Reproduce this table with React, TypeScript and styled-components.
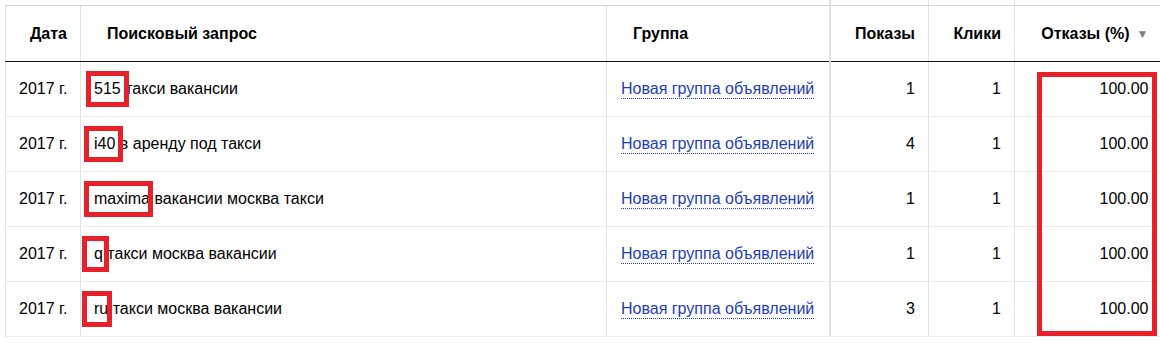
import React from "react";
import styled, { createGlobalStyle } from "styled-components";

const GlobalStyle = createGlobalStyle`
  html, body {
    margin: 0;
    padding: 0;
    background: #fff;
    overflow: hidden;
  }
  body {
    font-family: "Liberation Sans", Arial, sans-serif;
    color: #000;
  }
`;

const Wrapper = styled.div`
  position: relative;
  padding-left: 5px;
  width: 1160px;
  height: 344px;
  box-sizing: border-box;
`;

const Table = styled.table`
  border-collapse: collapse;
  table-layout: fixed;
  width: 1156px;
  font-size: 16px;
`;

const TopCell = styled.td<{ $edge?: boolean; $thick?: boolean }>`
  height: 5px;
  padding: 0;
  border-bottom: 1px solid #d2d2d2;
  border-left: ${(p) =>
    p.$edge ? `${p.$thick ? 2 : 1}px solid #e2e2e2` : "none"};
`;

const HeadCell = styled.th<{ $align?: string; $pad?: string; $thick?: boolean }>`
  height: 56px;
  padding: ${(p) => p.$pad || "0 13px"};
  text-align: ${(p) => p.$align || "left"};
  font-weight: bold;
  white-space: nowrap;
  border-left: ${(p) => (p.$thick ? 2 : 1)}px solid #e2e2e2;
  border-bottom: 1px solid #111;
  box-sizing: border-box;
`;

const Cell = styled.td<{ $align?: string; $pad?: string; $thick?: boolean }>`
  height: 55px;
  padding: ${(p) => p.$pad || "0 13px"};
  text-align: ${(p) => p.$align || "left"};
  white-space: nowrap;
  border-left: ${(p) => (p.$thick ? 2 : 1)}px solid #e2e2e2;
  border-bottom: 1px solid #ececec;
  box-sizing: border-box;
`;

const SortArrow = styled.span`
  display: inline-block;
  margin-left: 7px;
  font-size: 12px;
  color: #808080;
  vertical-align: 1px;
`;

const GroupLink = styled.a`
  color: #1c3cc0;
  text-decoration: none;
  border-bottom: 1px dotted #1c3cc0;
  padding-bottom: 1px;
  cursor: pointer;
`;

const Mark = styled.span<{ $l: number; $r: number }>`
  position: relative;
  display: inline-block;
  line-height: 18px;

  &::after {
    content: "";
    position: absolute;
    top: -9px;
    height: 36px;
    left: ${(p) => p.$l}px;
    right: ${(p) => p.$r}px;
    border: 5px solid #e8202a;
    box-sizing: border-box;
  }
`;

const BigBox = styled.div`
  position: absolute;
  left: 1037px;
  top: 72px;
  width: 120px;
  height: 264px;
  border: 5px solid #e8202a;
  box-sizing: border-box;
`;

type Row = {
  mark: string;
  rest: string;
  l: number;
  r: number;
  shows: number;
  clicks: number;
};

const rows: Row[] = [
  { mark: "515", rest: "такси вакансии", l: -8, r: -8, shows: 1, clicks: 1 },
  { mark: "i40", rest: "в аренду под такси", l: -10, r: -8, shows: 4, clicks: 1 },
  { mark: "maxima", rest: "вакансии москва такси", l: -10, r: -3, shows: 1, clicks: 1 },
  { mark: "q", rest: "такси москва вакансии", l: -12, r: -6, shows: 1, clicks: 1 },
  { mark: "ru", rest: "такси москва вакансии", l: -12, r: -4, shows: 3, clicks: 1 },
];

export default function App() {
  return (
    <Wrapper>
      <GlobalStyle />
      <Table>
        <colgroup>
          <col style={{ width: 75 }} />
          <col style={{ width: 526 }} />
          <col style={{ width: 223 }} />
          <col style={{ width: 99 }} />
          <col style={{ width: 86 }} />
          <col style={{ width: 147 }} />
        </colgroup>
        <tbody>
          <tr>
            <TopCell />
            <TopCell />
            <TopCell />
            <TopCell $edge $thick />
            <TopCell $edge />
            <TopCell $edge />
          </tr>
          <tr>
            <HeadCell $align="right">Дата</HeadCell>
            <HeadCell $pad="0 26px">Поисковый запрос</HeadCell>
            <HeadCell $pad="0 26px">Группа</HeadCell>
            <HeadCell $align="right" $thick>
              Показы
            </HeadCell>
            <HeadCell $align="right">Клики</HeadCell>
            <HeadCell $align="right" $pad="0 13px 0 0">
              Отказы (%)
              <SortArrow>▼</SortArrow>
            </HeadCell>
          </tr>
          {rows.map((row, i) => (
            <tr key={i}>
              <Cell $align="right">2017 г.</Cell>
              <Cell>
                <Mark $l={row.l} $r={row.r}>
                  {row.mark}
                </Mark>{" "}
                {row.rest}
              </Cell>
              <Cell $pad="0 14px">
                <GroupLink>Новая группа объявлений</GroupLink>
              </Cell>
              <Cell $align="right" $thick>
                {row.shows}
              </Cell>
              <Cell $align="right">{row.clicks}</Cell>
              <Cell $align="right">100.00</Cell>
            </tr>
          ))}
        </tbody>
      </Table>
      <BigBox />
    </Wrapper>
  );
}
